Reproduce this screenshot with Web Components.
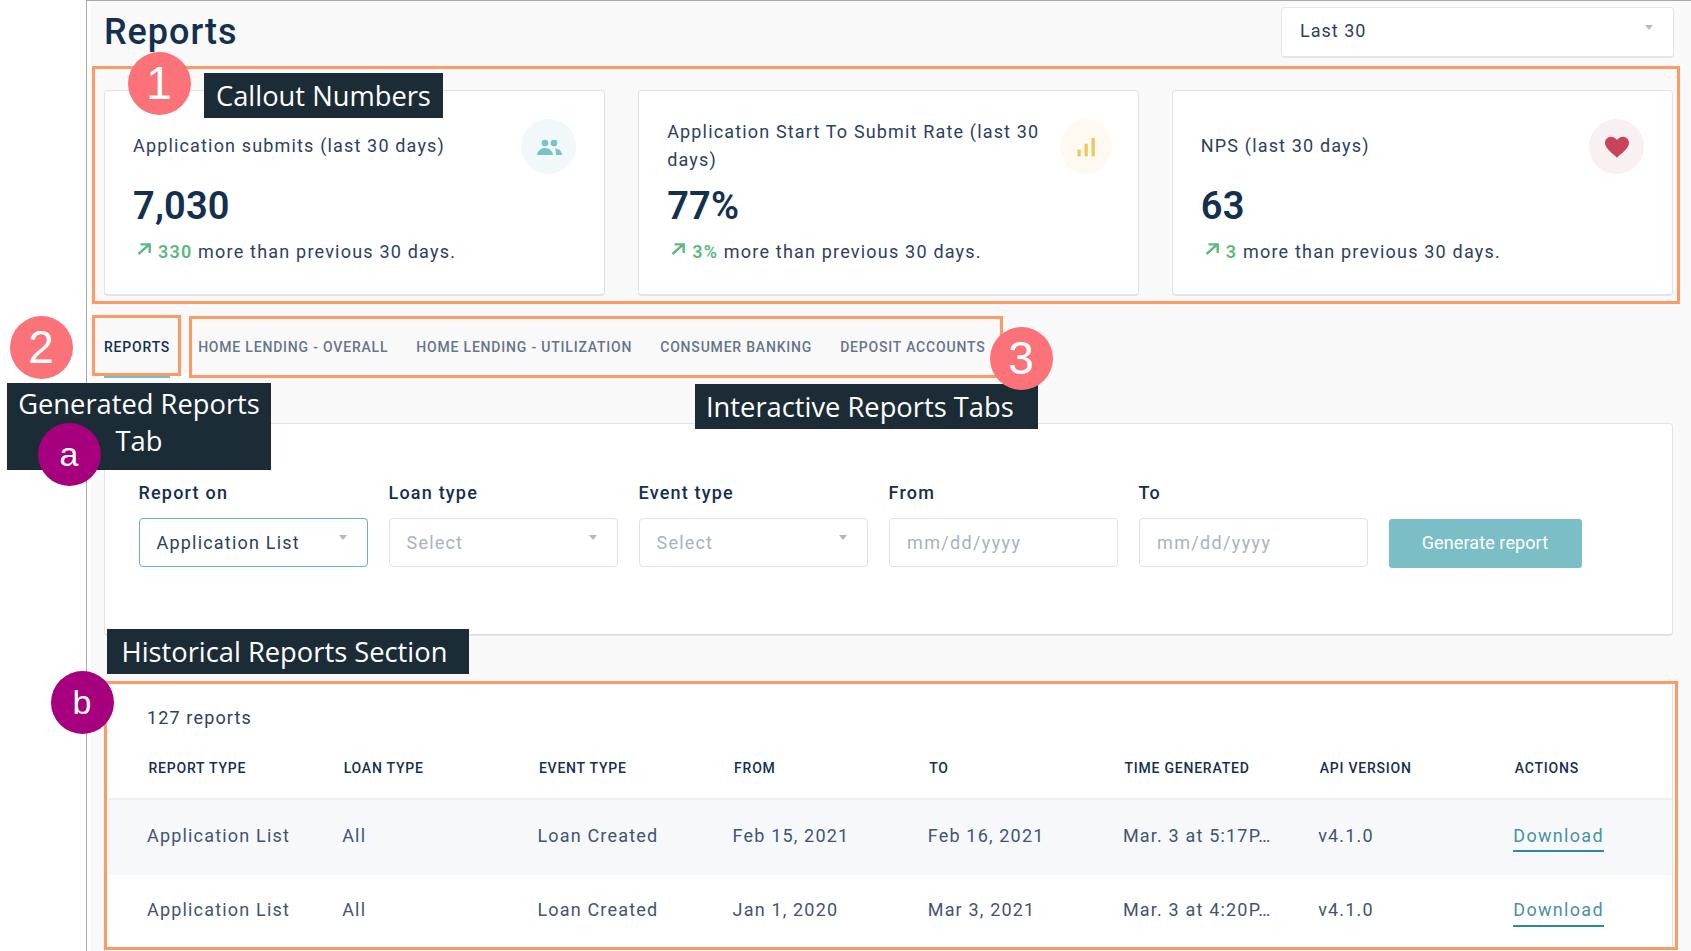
<!DOCTYPE html>
<html lang="en"><head><meta charset="utf-8"><title>Reports</title>
<style>
html,body{margin:0;padding:0;height:951px;overflow:hidden;background:#fff;font-family:Roboto,"Liberation Sans",sans-serif;color:#14304f}
</style></head><body>
<report-page>
  <page-header slot="main"></page-header>
  <div slot="main" style="display:flex;gap:33px">
    <stat-card label="Application submits (last 30 days)" value="7,030" delta="330" icon="people" tint="#f1f8f9" shift="-1"></stat-card>
    <stat-card label="Application Start To Submit Rate (last 30 days)" value="77%" delta="3%" icon="bars" tint="#fefaf1" iconw="52" iconm="-2"></stat-card>
    <stat-card label="NPS (last 30 days)" value="63" delta="3" icon="heart" tint="#f9f0f2" style="padding-left:27.5px"></stat-card>
  </div>
  <tab-bar slot="main"></tab-bar>
  <report-form slot="main"></report-form>
  <history-table slot="main"></history-table>

  <callout-frame slot="over" style="left:92px;top:66px;width:1588px;height:238px"></callout-frame>
  <callout-frame slot="over" style="left:92px;top:315px;width:89px;height:61px"></callout-frame>
  <callout-frame slot="over" style="left:189px;top:316px;width:814px;height:62px"></callout-frame>
  <callout-frame slot="over" style="left:104px;top:681px;width:1574px;height:269px"></callout-frame>

  <callout-label slot="over" style="left:204px;top:73px;width:239px;height:45px;padding-left:12px">Callout Numbers</callout-label>
  <callout-label slot="over" center style="left:7px;top:383px;width:264px;height:87px;padding-bottom:10px">Generated Reports<br>Tab</callout-label>
  <callout-label slot="over" style="left:695px;top:384px;width:343px;height:45px;padding:0 0 1px 11px">Interactive Reports Tabs</callout-label>
  <callout-label slot="over" style="left:107px;top:629px;width:362px;height:45px;padding-left:14.5px">Historical Reports Section</callout-label>

  <callout-badge slot="over" style="left:127.5px;top:52px">1</callout-badge>
  <callout-badge slot="over" style="left:9.5px;top:316px">2</callout-badge>
  <callout-badge slot="over" style="left:989.5px;top:327px">3</callout-badge>
  <callout-badge slot="over" kind="sub" style="left:37.5px;top:423px">a</callout-badge>
  <callout-badge slot="over" kind="sub" style="left:50.5px;top:671px">b</callout-badge>
</report-page>
<script>
const def=(name,css,html,init)=>{customElements.define(name,class extends HTMLElement{
  connectedCallback(){ if(this.shadowRoot)return; const r=this.attachShadow({mode:'open'});
    r.innerHTML='<style>'+css+'</style>'+(typeof html==='function'?html(this):html); if(init)init(this,r);}
});};
const ICONS={
 people:'<circle cx="12" cy="11" r="3.3"/><circle cx="21" cy="11" r="3.3"/><path d="M4 23c0-3.6 3.6-7 8-7s8 3.4 8 7z"/><path d="M22 16.2c3.4.3 7 2.8 7 6.8h-6c0-2.6-.2-4.6-1-6.8z"/>',
 bars:'<rect x="6.5" y="17.7" width="3.3" height="6.6"/><rect x="13.5" y="11.7" width="3.3" height="12.6"/><rect x="20.5" y="6" width="3.3" height="18.3"/>',
 heart:'<path d="M15 25.7C12 22.5 3 17 3 10.8 3 7 6 4.7 9 4.7c2.5 0 4.8 1.3 6 3.3 1.2-2 3.5-3.3 6-3.3 3 0 6 2.3 6 6.1C27 17 18 22.5 15 25.7z"/>'};
const ICOL={people:'#7cc0ca',bars:'#edc75f',heart:'#c9445a'};

def('report-page',`
 :host{display:block;height:951px;position:relative;overflow:hidden}
 .line{margin-left:86px;height:951px;box-sizing:border-box;border-left:1px solid #a9a9a9;border-top:1px solid #a9a9a9;padding-left:4px;background:#fff}
 .main{height:100%;background:#f9f9f9;padding:0 18px 0 13px;box-sizing:border-box;overflow:hidden}
`,`<div class="line"><div class="main"><slot name="main"></slot></div></div><slot name="over"></slot>`);

def('page-header',`
 :host{display:flex;justify-content:space-between;align-items:flex-start;height:89px}
 h1{margin:11px 0 0;font:500 36px/41px Roboto,sans-serif;color:#14304f;letter-spacing:.95px}
 .dd{margin-top:6px;width:393px;height:51px;box-sizing:border-box;border:1px solid #e2e5e9;border-bottom-width:2px;border-radius:4px;background:#fff;display:flex;align-items:center;padding:0 18px 2px;position:relative;font:400 18px/24px Roboto,sans-serif;letter-spacing:1px;color:#2b4163;margin-right:-1px}
 .dd i{position:absolute;right:20px;top:17px;border:4px solid transparent;border-top:5px solid #b4bdc8;border-bottom:0}
`,`<h1>Reports</h1><div class="dd">Last 30<i></i></div>`);

def('stat-card',`
 :host{display:block;flex:1 1 0;min-width:0;box-sizing:border-box;height:206px;background:#fff;border:1px solid #e0e4e9;border-bottom-width:2px;border-radius:4px;padding:28px 28px 0}
 .top{display:flex;align-items:center;height:55px;justify-content:space-between}
 .lab{font:400 18px/28px Roboto,sans-serif;letter-spacing:1.16px;color:#2b4163;flex:1;min-width:0;padding:0 1px 2px 0}
 .ic{flex:0 0 auto;height:55px;border-radius:50%;display:flex;align-items:center;justify-content:center}
 .ic svg{width:30px;height:30px;display:block}
 .val{margin-top:11px;font:600 38px/42px Roboto,sans-serif;color:#14304f;letter-spacing:.2px}
 .tr{margin-top:13px;font:400 18px/24px Roboto,sans-serif;letter-spacing:1.2px;color:#2b4163;display:flex;align-items:center;white-space:pre}
 .tr svg{width:14px;height:12px;margin:-7px 7px 0 4px;flex:none}
 b{font-weight:600;color:#5cb97f}
`,h=>{const i=h.getAttribute('icon'),w=h.getAttribute('iconw')||55,m=h.getAttribute('iconm')||0,s=h.getAttribute('shift')||0;return `<div class="top"><div class="lab">${h.getAttribute('label')}</div><div class="ic" style="width:${w}px;margin-right:${m}px;background:${h.getAttribute('tint')}"><svg viewBox="0 0 30 30" fill="${ICOL[i]}" style="margin-left:${s*2}px">${ICONS[i]}</svg></div></div><div class="val">${h.getAttribute('value')}</div><div class="tr"><svg viewBox="0 0 14 12" fill="none" stroke="#5cb97f" stroke-width="2.4"><path d="M1.5 11L12 1.7M3.5 1.4H12.7V10"/></svg><b>${h.getAttribute('delta')}</b> more than previous 30 days.</div>`});

def('tab-bar',`
 :host{display:flex;gap:28px;margin-top:20px;height:62px;box-sizing:border-box;font:500 14px/20px Roboto,sans-serif;letter-spacing:.8px;text-transform:uppercase;color:#66758a}
 span{padding-top:21px;height:62px;box-sizing:border-box;white-space:nowrap}
 .on{color:#14304f;border-bottom:2px solid #72c0c9}
`,`<span class="on">Reports</span><span>Home Lending - Overall</span><span>Home Lending - Utilization</span><span>Consumer Banking</span><span>Deposit Accounts</span>`);

def('report-form',`
 :host{display:block;margin-top:45px;height:213px;box-sizing:border-box;background:#fff;border:1px solid #e0e4e9;border-bottom-width:2px;border-radius:4px;padding:57px 0 0 33.5px}
 .g{display:grid;grid-template-columns:repeat(5,229px) 194px;column-gap:21px;align-items:start}
 label{display:block;font:500 18px/24px Roboto,sans-serif;letter-spacing:1.2px;color:#14304f;margin-bottom:13px}
 .c{height:49px;box-sizing:border-box;border:1.5px solid #dfe3e8;border-radius:4px;background:#fff;display:flex;align-items:center;padding:0 17px;font:400 18px/24px Roboto,sans-serif;letter-spacing:1.2px;color:#a8b2c0;position:relative}
 .c.on{border-color:#5fb4bf;color:#2b4163}
 .c.d{letter-spacing:1.35px;padding-left:17.5px}
 .c i{position:absolute;right:20px;top:16px;border:4px solid transparent;border-top:5px solid #aeb8c4;border-bottom:0}
 button{grid-column:6;justify-self:start;margin:38px 0 0 0;width:193px;height:49px;border:0;border-radius:3px;background:#7bbec6;color:#fff;font:400 18px/24px Roboto,sans-serif;letter-spacing:.1px;padding:0 0 2px}
`,`<div class="g">
 <div><label>Report on</label><div class="c on">Application List<i></i></div></div>
 <div><label>Loan type</label><div class="c">Select<i></i></div></div>
 <div><label>Event type</label><div class="c">Select<i></i></div></div>
 <div><label>From</label><div class="c d">mm/dd/yyyy</div></div>
 <div><label>To</label><div class="c d">mm/dd/yyyy</div></div>
 <button>Generate report</button></div>`);

const COLS=['Report Type','Loan Type','Event Type','From','To','Time Generated','API Version','Actions'];
const ROWS=[['Application List','All','Loan Created','Feb 15, 2021','Feb 16, 2021','Mar. 3 at 5:17P…','v4.1.0'],['Application List','All','Loan Created','Jan 1, 2020','Mar 3, 2021','Mar. 3 at 4:20P…','v4.1.0']];
def('history-table',`
 :host{display:block;margin-top:45px;height:290px;box-sizing:border-box;background:#fff;border:1px solid #e0e4e9;border-radius:4px}
 .n{padding:24px 0 0 42px;font:400 18px/24px Roboto,sans-serif;letter-spacing:1.14px;color:#2b4163;height:36px}
 .r{display:grid;grid-template-columns:repeat(8,195.2px);padding-left:42px;align-items:center;box-sizing:border-box}
 .h{height:58px;border-bottom:2px solid #eef0f2;font:500 14px/20px Roboto,sans-serif;letter-spacing:.78px;text-transform:uppercase;color:#14304f;padding-left:43.5px;padding-bottom:5px}
 .b{font:400 18px/24px Roboto,sans-serif;letter-spacing:1.18px;color:#3f5573;white-space:nowrap;padding-bottom:4px}
 .b.a{height:75px;background:#f7f8fa}.b.z{height:73px}
 a{color:#4a92a3;justify-self:start;border-bottom:2px solid #2d8a9e;padding-bottom:2px;margin-top:5px;letter-spacing:1.3px}
 .z a{margin-top:6px;padding-bottom:3px}
`,`<div class="n">127 reports</div><div class="r h">${COLS.map(c=>`<span>${c}</span>`).join('')}</div>${ROWS.map((r,i)=>`<div class="r b ${i?'z':'a'}">${r.map(c=>`<span>${c}</span>`).join('')}<a>Download</a></div>`).join('')}`);

def('callout-frame',`:host{position:absolute;box-sizing:border-box;border:3px solid #fd9a66;display:block}`,``);
def('callout-label',`:host{position:absolute;box-sizing:border-box;display:flex;align-items:center;background:#1c2c36;color:#fff;font:400 27.3px/37px "Open Sans",sans-serif;white-space:nowrap}
 :host([center]){justify-content:center;text-align:center}`,`<div><slot></slot></div>`);
def('callout-badge',`
 :host{position:absolute;width:63px;height:63px;border-radius:50%;background:#fb7278;color:#fff;display:flex;align-items:center;justify-content:center;font:400 46px/63px "Liberation Sans",sans-serif}
 :host([kind=sub]){background:#a6007f;font-size:34px}`,`<slot></slot>`);
</script>
</body></html>
